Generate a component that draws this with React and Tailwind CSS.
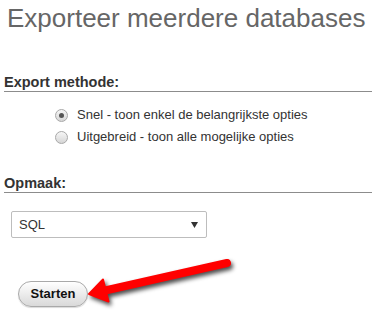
import React from 'react';

function Radio({ checked, label }) {
  return (
    <label className="flex items-center h-[22px] pl-[55px] text-[13px] text-[#333]">
      <span className="flex items-center justify-center w-[13px] h-[13px] rounded-full border border-[#a8a8a8] bg-linear-to-b from-[#f6f6f6] to-[#d6d6d6]">
        {checked && <span className="w-[5px] h-[5px] rounded-full bg-[#555]" />}
      </span>
      <span className="ml-[9px]">{label}</span>
    </label>
  );
}

function Arrow() {
  return (
    <svg
      className="absolute left-0 top-0 drop-shadow-[2px_3px_2px_rgba(0,0,0,0.7)]"
      width="372"
      height="324"
      viewBox="0 0 372 324"
    >
      <line x1="227" y1="263" x2="103" y2="291" stroke="#f00" strokeWidth="8" strokeLinecap="round" />
      <polygon points="89,294 103,279.5 108.5,301.5" fill="#f00" stroke="#f00" strokeWidth="2" strokeLinejoin="round" />
    </svg>
  );
}

export default function App() {
  return (
    <div className="relative w-[372px] h-[324px] overflow-hidden bg-white font-['Liberation_Sans',Arial,sans-serif]">
      <h1 className="pt-[3px] pl-[7px] text-[26px] leading-[30px] text-[#666] whitespace-nowrap">
        Exporteer meerdere databases
      </h1>

      <div className="mt-[41px] ml-[4px] border-b border-[#8c8c8c] text-[14.5px] leading-[17px] font-bold text-[#333]">
        Export methode:
      </div>
      <div className="mt-[12px]">
        <Radio checked label="Snel - toon enkel de belangrijkste opties" />
        <Radio label="Uitgebreid - toon alle mogelijke opties" />
      </div>

      <div className="mt-[27px] ml-[4px] border-b border-[#8c8c8c] text-[14.5px] leading-[17px] font-bold text-[#333]">
        Opmaak:
      </div>
      <div className="mt-[18px] ml-[11px] w-[196px] h-[27px] flex items-center justify-between border border-[#bdbdbd] rounded-[2px] pl-[7px] pr-[8px] text-[13px] text-[#333]">
        <span>SQL</span>
        <svg width="7" height="6" viewBox="0 0 7 6">
          <polygon points="0,0 7,0 3.5,6" fill="#333" />
        </svg>
      </div>

      <button className="mt-[43px] ml-[18px] w-[70px] h-[26px] rounded-full border border-[#a9a9a9] bg-linear-to-b from-white to-[#d9d9d9] text-[13px] font-bold text-[#111] shadow-[0_1px_1px_rgba(0,0,0,0.15)]">
        Starten
      </button>

      <Arrow />
    </div>
  );
}
